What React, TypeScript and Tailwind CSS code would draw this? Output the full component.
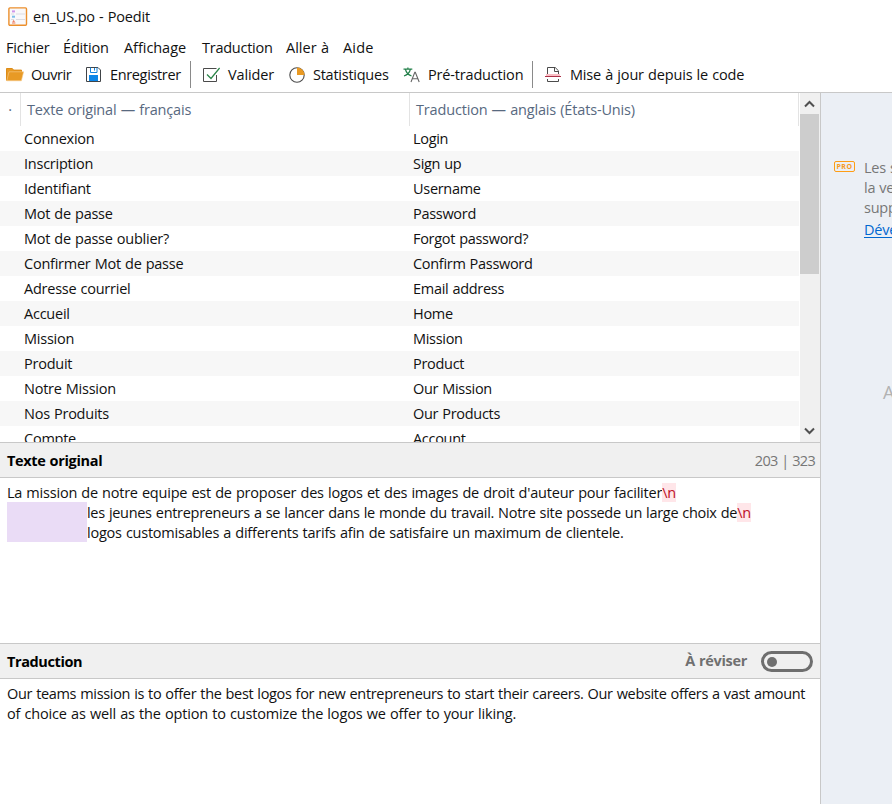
import type { ReactNode } from "react";

const rows: [string, string][] = [
  ["Connexion", "Login"],
  ["Inscription", "Sign up"],
  ["Identifiant", "Username"],
  ["Mot de passe", "Password"],
  ["Mot de passe oublier?", "Forgot password?"],
  ["Confirmer Mot de passe", "Confirm Password"],
  ["Adresse courriel", "Email address"],
  ["Accueil", "Home"],
  ["Mission", "Mission"],
  ["Produit", "Product"],
  ["Notre Mission", "Our Mission"],
  ["Nos Produits", "Our Products"],
  ["Compte", "Account"],
];

function AppIcon() {
  return (
    <svg width="20" height="20" viewBox="0 0 20 20" className="shrink-0">
      <rect x=".9" y=".9" width="17.6" height="17.4" rx="1" fill="#f9f8fa" stroke="#ec8f2c" strokeWidth="1.4" />
      <path d="M8 7h9M3 7h3M8 12.5h9M3 12.5h3" stroke="#dcdce2" />
      <rect x="4" y="3.4" width="3" height="2" fill="#cf94ea" />
      <rect x="4" y="8.7" width="3" height="2" fill="#7cbde8" />
      <path d="M4 16h3.4M4.8 14.8l.8-1 .9 1" stroke="#ee7b5d" strokeWidth="1.1" fill="none" />
    </svg>
  );
}

function FolderIcon() {
  return (
    <svg width="18" height="15" viewBox="0 0 18 15">
      <path d="M.5 13.5V1.5h5.8l1.3 1.6h7.9v2" fill="#e89a25" stroke="#dd8c17" />
      <path d="M.8 13.8 3 4.8h14.6l-2.2 9z" fill="#e89a25" stroke="#f6cd8d" strokeWidth=".6" />
    </svg>
  );
}

function SaveIcon() {
  return (
    <svg width="16" height="16" viewBox="0 0 16 16" fill="none">
      <path d="M.5.5h11.5l2.5 2.5v11.5H.5z" stroke="#404448" fill="#fff" />
      <path d="M4.5.5v5h6.5V.5" stroke="#1282dc" />
      <path d="M8.5 1v2.6" stroke="#1282dc" />
      <path d="M3 8h9v6H3z" fill="#0c86e8" />
    </svg>
  );
}

function CheckIcon() {
  return (
    <svg width="18" height="16" viewBox="0 0 18 16" fill="none">
      <path d="M13.5 1.5H.5v13h13V8" stroke="#4b4b4b" />
      <path d="m4 7.5 4 4L16.6 1" stroke="#2b8548" strokeWidth="1.2" />
    </svg>
  );
}

function PieIcon() {
  return (
    <svg width="16" height="16" viewBox="0 0 16 16">
      <circle cx="8" cy="8" r="7.2" fill="#fff" stroke="#4b4b4b" strokeWidth="1.1" />
      <path d="M8 8V.4A7.6 7.6 0 0 1 15.6 8z" fill="#e99a24" />
    </svg>
  );
}

function TranslateIcon() {
  return (
    <svg width="17" height="16" viewBox="0 0 17 16" fill="none">
      <path d="M.5 2.2h8.8M4.9.4v2M2.5 2.5C3.2 5.6 5.3 7.8 8.5 9M7.3 2.5C6.6 5.6 4.4 7.8 1 9" stroke="#23804a" strokeWidth="1.2" />
      <path d="m8 15 3.8-9.6h.5L16.2 15M9.2 11.8h5.7" stroke="#666" strokeWidth="1.1" />
    </svg>
  );
}

function UpdateIcon() {
  return (
    <svg width="16" height="16" viewBox="0 0 16 16" fill="none">
      <path d="M2.5 8V.5h7.7l3.3 3.3V8M9.5.6v3.9h3.8" stroke="#4b4b4b" />
      <path d="M2.5 12v2.5h11V12" stroke="#4b4b4b" />
      <path d="M1 7h14v2H1z" fill="#f9bfc5" />
      <path d="M0 9.5h16" stroke="#ad3148" />
    </svg>
  );
}

function Chevron({ up = false }: { up?: boolean }) {
  return (
    <svg width="11" height="8" viewBox="0 0 11 8" fill="none">
      <path d={up ? "M1 6.5 5.5 2 10 6.5" : "M1 1.5 5.5 6 10 1.5"} stroke="#505050" strokeWidth="2" />
    </svg>
  );
}

function Tool({ cls, icon, children }: { cls: string; icon: ReactNode; children: ReactNode }) {
  return (
    <div className={"flex shrink-0 items-center " + cls}>
      {icon}
      <span>{children}</span>
    </div>
  );
}

function Newline() {
  return <span className="bg-[#ffe6e9] text-[#bd1027]">\n</span>;
}

export default function App() {
  return (
    <div className="flex h-[804px] w-[892px] flex-col overflow-hidden whitespace-nowrap bg-white font-['Open_Sans','Noto_Sans',sans-serif] text-[14.5px] leading-5 tracking-[-0.25px] text-[#111] [word-spacing:0.6px]">
      <header className="h-[93px] shrink-0 border-b border-[#c8c8c8]">
        <div className="flex h-[34px] items-center gap-[5px] pl-2 tracking-[-0.18px]">
          <AppIcon />
          <span>en_US.po - Poedit</span>
        </div>
        <nav className="flex h-[26px] items-center pl-1.5 pt-0.5 tracking-[-0.17px]">
          <span className="w-[57px]">Fichier</span>
          <span className="w-[61px]">Édition</span>
          <span className="w-[78px] tracking-[-0.05px]">Affichage</span>
          <span className="w-[84px] tracking-[-0.25px]">Traduction</span>
          <span className="w-[57px] tracking-[0px]">Aller à</span>
          <span className="tracking-[0.2px]">Aide</span>
        </nav>
        <div className="flex h-[29px] items-center pl-1.5">
          <Tool cls="w-[80px] gap-[7px] tracking-[-0.45px]" icon={<FolderIcon />}>Ouvrir</Tool>
          <Tool cls="w-[104px] gap-2 tracking-[-0.35px]" icon={<SaveIcon />}>Enregistrer</Tool>
          <div className="h-[27px] w-px bg-[#8a8a8a]" />
          <Tool cls="ml-3 w-[86px] gap-[7px] tracking-[-0.15px]" icon={<CheckIcon />}>Valider</Tool>
          <Tool cls="w-[114px] gap-2" icon={<PieIcon />}>Statistiques</Tool>
          <Tool cls="w-[129px] gap-2 tracking-[-0.17px]" icon={<TranslateIcon />}>Pré-traduction</Tool>
          <div className="h-[27px] w-px bg-[#8a8a8a]" />
          <Tool cls="ml-3 gap-[9px] tracking-[-0.17px]" icon={<UpdateIcon />}>Mise à jour depuis le code</Tool>
        </div>
      </header>
      <div className="flex min-h-0 flex-1">
        <main className="flex w-[821px] shrink-0 flex-col border-r border-[#c8c8c8]">
          <section className="flex h-[349px] shrink-0 overflow-hidden">
            <div className="w-[799px]">
              <div className="flex h-[33px] items-center tracking-[-0.17px] text-[#58697f]">
                <div className="flex h-full w-[21px] items-center justify-center border-r border-[#e3e3e3]">·</div>
                <div className="flex h-full w-[389px] items-center border-r border-[#e3e3e3] pl-1.5">Texte original — français</div>
                <div className="flex h-full w-[389px] items-center border-r border-[#e3e3e3] pl-1.5">Traduction — anglais (États-Unis)</div>
              </div>
              {rows.map(([source, target]) => (
                <div key={source} className="grid h-[25px] grid-cols-[389px_1fr] items-center pl-6 odd:bg-[#f7f7f7] even:bg-white">
                  <span className="tracking-[-0.24px]">{source}</span>
                  <span className="tracking-[-0.3px]">{target}</span>
                </div>
              ))}
            </div>
            <div className="ml-px flex w-5 flex-col items-center bg-[#f0f0f0]">
              <div className="flex h-[21px] items-center pr-0.5"><Chevron up /></div>
              <div className="mr-px h-40 w-[19px] bg-[#cdcdcd]" />
              <div className="mt-auto flex h-[21px] items-center pb-0.5 pr-0.5"><Chevron /></div>
            </div>
          </section>
          <div className="flex h-9 shrink-0 items-center justify-between border-y border-[#c8c8c8] bg-[#f0f0f0] pl-[7px] pr-[5px] pt-0.5">
            <h2 className="font-bold tracking-[-0.33px] text-black">Texte original</h2>
            <span className="tracking-[-0.7px] text-[#777]">203 | 323</span>
          </div>
          <section className="h-[165px] shrink-0 px-[7px] pt-[5px]">
            <p className="tracking-[-0.21px]">La mission de notre equipe est de proposer des logos et des images de droit d'auteur pour faciliter<Newline /></p>
            <div className="flex">
              <div className="-mt-px h-10 w-20 bg-[#eadcf6]" />
              <div>
                <p className="tracking-[-0.3px]">les jeunes entrepreneurs a se lancer dans le monde du travail. Notre site possede un large choix de<Newline /></p>
                <p className="tracking-[-0.23px]">logos customisables a differents tarifs afin de satisfaire un maximum de clientele.</p>
              </div>
            </div>
          </section>
          <div className="flex h-9 shrink-0 items-center border-y border-[#c8c8c8] bg-[#f0f0f0] px-[7px]">
            <h2 className="pt-0.5 font-bold tracking-[-0.4px] text-black">Traduction</h2>
            <span className="ml-auto font-bold tracking-[-0.3px] text-[#707070]">À réviser</span>
            <div className="ml-[14px] mt-px flex h-[21px] w-[52px] items-center rounded-full border-[3px] border-[#6e6e6e] pl-[3px]">
              <div className="size-2.5 rounded-full bg-[#707070]" />
            </div>
          </div>
          <section className="pl-[7px] pt-[5px]">
            <p className="tracking-[-0.33px]">Our teams mission is to offer the best logos for new entrepreneurs to start their careers. Our website offers a vast amount</p>
            <p className="tracking-[-0.16px]">of choice as well as the option to customize the logos we offer to your liking.</p>
          </section>
        </main>
        <aside className="min-w-0 flex-1 overflow-hidden bg-[#ebeff5] pl-[13px] pt-[65px] text-[#777]">
          <div className="flex w-[300px] gap-[9px]">
            <div className="mt-[3px] flex h-[11px] w-[21px] items-center justify-center rounded-[2px] border border-[#ff9d14] text-[7px] font-bold leading-none tracking-[0.5px] text-[#f59a23]">PRO</div>
            <div>
              <p>Les suggestions sont dans</p>
              <p>la version complète,</p>
              <p>supportez le</p>
              <a className="mt-0.5 block text-[#0067d0] underline underline-offset-2">Développement</a>
            </div>
          </div>
          <p className="ml-[49px] mt-[142px] text-[18px] text-[#b2b2b2]">Aucune</p>
        </aside>
      </div>
    </div>
  );
}
